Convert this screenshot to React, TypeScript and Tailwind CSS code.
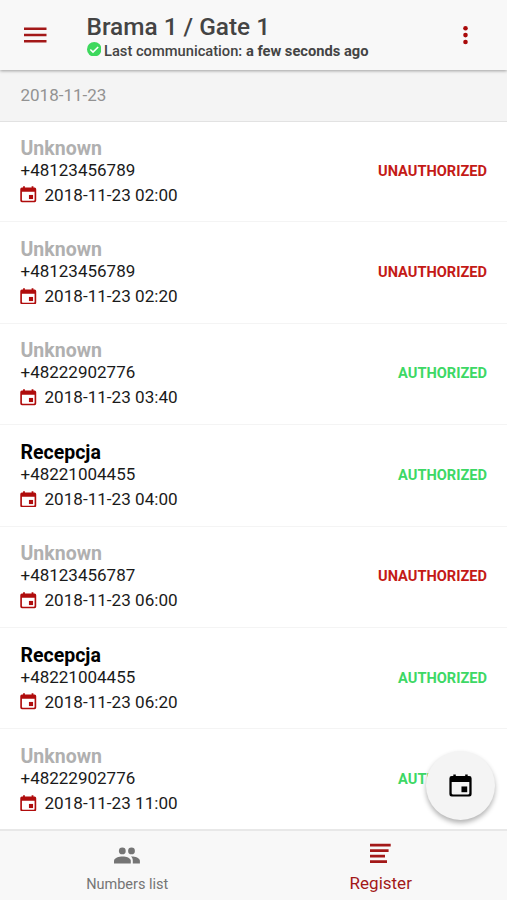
import React from "react";

interface IEntry {
  name?: string;
  phone: string;
  time: string;
  authorized: boolean;
}

const entries: IEntry[] = [
  { phone: "+48123456789", time: "2018-11-23 02:00", authorized: false },
  { phone: "+48123456789", time: "2018-11-23 02:20", authorized: false },
  { phone: "+48222902776", time: "2018-11-23 03:40", authorized: true },
  { name: "Recepcja", phone: "+48221004455", time: "2018-11-23 04:00", authorized: true },
  { phone: "+48123456787", time: "2018-11-23 06:00", authorized: false },
  { name: "Recepcja", phone: "+48221004455", time: "2018-11-23 06:20", authorized: true },
  { phone: "+48222902776", time: "2018-11-23 11:00", authorized: true },
];

const CalendarIcon = ({ className }: { className: string }) => (
  <svg viewBox="0 0 24 24" fill="currentColor" className={className}>
    <path
      fillRule="evenodd"
      d="M4.500 0.500h2.600v1.700h9.800V0.500h2.600v1.700h1.700A2.400 2.400 0 0 1 23.600 4.600v16.600A2.400 2.400 0 0 1 21.200 23.600H2.800A2.400 2.400 0 0 1 0.400 21.200V4.600A2.400 2.400 0 0 1 2.800 2.200h1.700zM2.800 8.300v11.900a1.200 1.200 0 0 0 1.200 1.200h16a1.200 1.200 0 0 0 1.200-1.200V8.300z"
    />
    <path d="M13 13h6v6H13z" />
  </svg>
);

const Row = ({ entry }: { entry: IEntry }) => {
  return (
    <li className="flex h-[101.4px] items-center justify-between border-b border-[#f4f4f4] pl-[20.5px] pr-[20px]">
      <div className="pt-[2px]">
        <h3
          className={`text-[19.5px] leading-[20px] font-bold ${
            entry.name ? "text-black" : "text-[#b0b0b0]"
          }`}
        >
          {entry.name || "Unknown"}
        </h3>
        <p className="text-[17px] leading-[22px] text-[#1a1a1a]">{entry.phone}</p>
        <div className="mt-[3px] flex items-center gap-[8px]">
          <CalendarIcon className="-ml-[0.5px] h-[16.5px] w-[16.5px] text-[#b00c0c]" />
          <time className="text-[17.1px] leading-[22px] text-[#1a1a1a]">{entry.time}</time>
        </div>
      </div>
      <span
        className={`pb-px text-[14.6px] leading-5 font-bold ${
          entry.authorized ? "text-[#3dd865]" : "text-[#c41a16]"
        }`}
      >
        {entry.authorized ? "AUTHORIZED" : "UNAUTHORIZED"}
      </span>
    </li>
  );
};

const App = () => {
  return (
    <div className="relative flex h-[900px] w-[507px] flex-col overflow-hidden bg-white font-['Roboto',sans-serif]">
      <header className="z-10 flex h-[70px] shrink-0 items-center bg-[#f8f8f8] shadow-[0_1px_3px_rgba(0,0,0,0.35)]">
        <button className="ml-6 w-[62.5px]" aria-label="Menu">
          <svg viewBox="0 0 23 16" className="h-4 w-[23px]" fill="#a31818">
            <path d="M0 .6h22.500v2.400H0zM0 6.800h22.500v2.400H0zM0 13h22.500v2.400H0z" />
          </svg>
        </button>
        <div className="flex-1 pt-[3px]">
          <h1 className="text-[24.4px] leading-[27px] font-medium text-[#444]">Brama 1 / Gate 1</h1>
          <div className="flex items-center gap-[3px] pt-px text-[14.7px] leading-5 font-medium text-[#444]">
            <svg viewBox="0 0 14 14" className="-mt-[3px] h-[14.5px] w-[14.5px]">
              <circle cx="7" cy="7" r="7" fill="#3dd85d" />
              <path d="M3.200 7.300l2.600 2.500 5-5" fill="none" stroke="#fff" strokeWidth="1.500" />
            </svg>
            <p>
              Last communication: <b>a few seconds ago</b>
            </p>
          </div>
        </div>
        <button className="mr-[39px]" aria-label="More">
          <svg viewBox="0 0 5 20" className="h-5 w-[5px]" fill="#a90909">
            <circle cx="2.500" cy="3.200" r="2.300" />
            <circle cx="2.500" cy="10.100" r="2.300" />
            <circle cx="2.500" cy="17" r="2.300" />
          </svg>
        </button>
      </header>

      <div className="flex h-[51.5px] shrink-0 items-center border-b border-[#e2e2e2] bg-[#f4f4f4] pl-[20.5px] text-[17px] text-[#929292]">
        2018-11-23
      </div>

      <ul className="-mt-[0.5px] min-h-0 flex-1 overflow-hidden">
        {entries.map((entry) => (
          <Row key={entry.time} entry={entry} />
        ))}
      </ul>

      <nav className="grid h-[71px] shrink-0 grid-cols-2 border-t-2 border-[#e8e8e8] bg-[#f8f8f8]">
        <button className="flex flex-col items-center pt-4 text-[14.5px] leading-5 text-[#757575]">
          <svg viewBox="0 0 26 18" className="ml-px h-[18px] w-[26px]" fill="currentColor">
            <circle cx="8.300" cy="3.900" r="3.400" />
            <circle cx="17.500" cy="3.900" r="3.400" />
            <path d="M0 16.500v-2.700c0-2.900 5-4.300 8.600-4.300s8.200 1.400 8.200 4.300v2.700z" />
            <path d="M17.700 9.500c3.400 0 8.200 1.400 8.200 4.300v2.700h-7.100v-2.700c0-1.800-.6-3.200-1.900-4.200z" />
          </svg>
          <span className="mt-[10px] ml-px">Numbers list</span>
        </button>
        <button className="flex flex-col items-center pt-3 text-[17px] leading-[26px] text-[#a31818]">
          <svg viewBox="0 0 21 20" className="h-5 w-[21px]" fill="currentColor">
            <path d="M0 .7h20.700v2.700H0zM0 6.200h18.600v2.700H0zM0 11.700h15v2.700H0zM0 17.200h17v2.700H0z" />
          </svg>
          <span className="mt-[7px] ml-px">Register</span>
        </button>
      </nav>

      <button
        aria-label="Pick a date"
        className="absolute top-[751px] left-[426px] z-20 flex size-[69px] items-center justify-center rounded-full bg-[#f4f4f4] shadow-[0_3px_5px_rgba(0,0,0,0.3)]"
      >
        <CalendarIcon className="size-[23px] text-black" />
      </button>
    </div>
  );
};

export default App;
